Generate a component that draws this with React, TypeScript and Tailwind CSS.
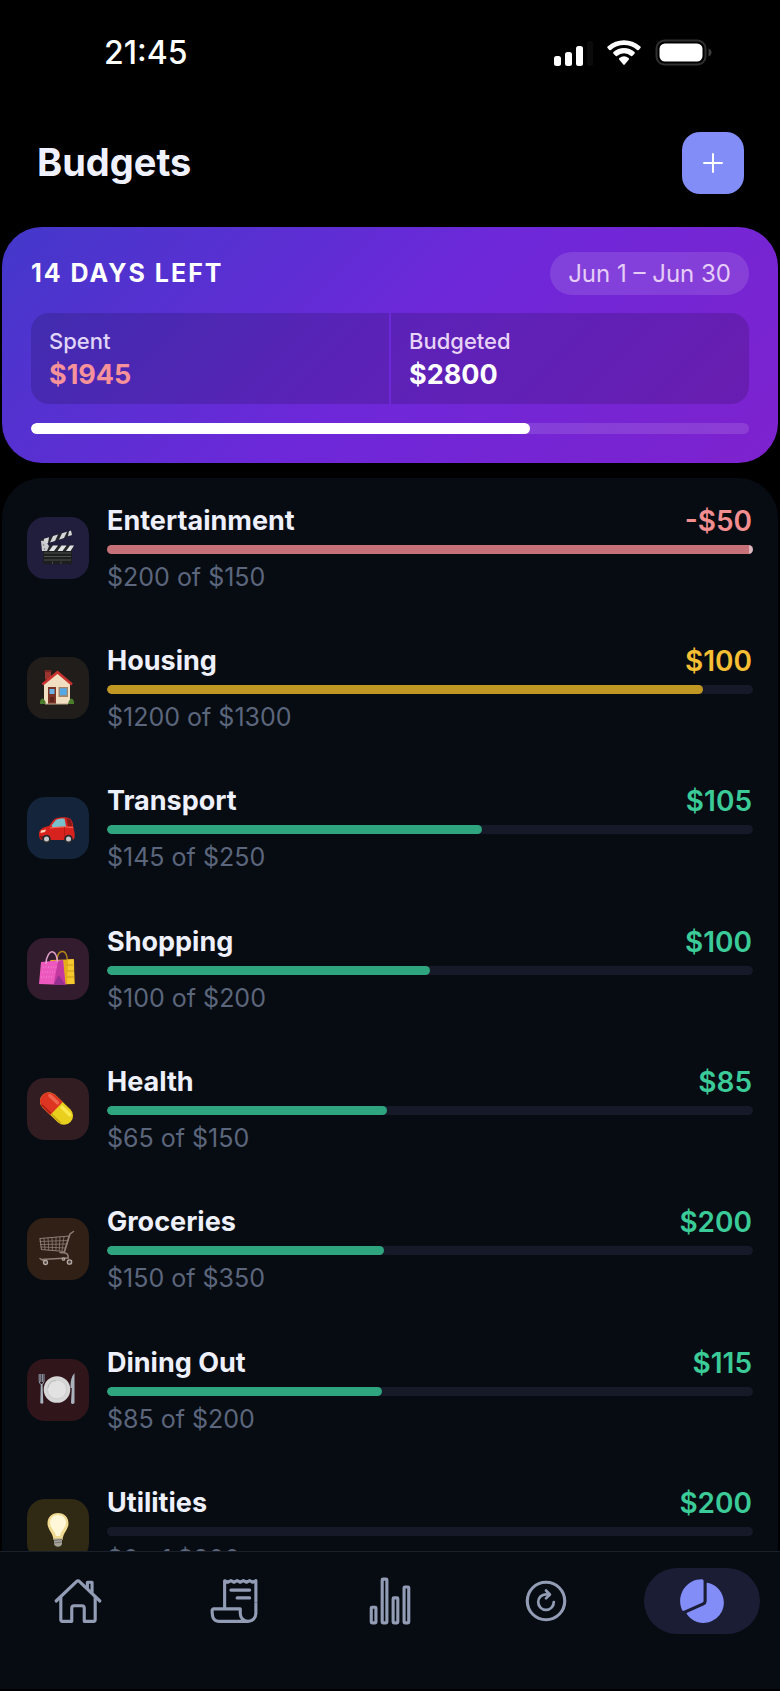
import type { ReactNode } from "react";
import {
  IoAdd,
  IoHomeOutline,
  IoPieChart,
  IoReceiptOutline,
  IoRefreshCircleOutline,
  IoStatsChartOutline,
} from "react-icons/io5";

function Glyph({ children }: { children: ReactNode }) {
  return (
    <svg viewBox="0 0 36 36" className="size-9 overflow-visible" aria-hidden="true">
      {children}
    </svg>
  );
}

const Clapper = () => (
  <Glyph>
    <path d="M0 10 31 0.5l1 5L2 15z" fill="#26272b" />
    <path d="M4 8.800 9 7.200l-1 6-5 1.500zM13 6l5-1.500-3 6.500-5 1.500zM22 3.200l5-1.500-3 6.400-5 1.600zM29 1.200l2-.7 1 4.500-4 1.300z" fill="#d6d6d9" />
    <path d="M3 21V15.500h31l-2 6H3z" fill="#26272b" />
    <path d="M1 11c3-1 6 2 8 5l-2 5H2z" fill="#c9cccf" />
    <circle cx="3.500" cy="15" r="0.800" fill="#777" />
    <circle cx="4.500" cy="19" r="0.800" fill="#777" />
    <path d="M13 15.500h5l-4 5.500H9zM21.500 15.500h5l-4 5.500h-5zM30 15.500h4l-3.500 5.500h-4.500z" fill="#e2e2e4" />
    <path d="M3 21h29v12.500q0 .8-1 .8H4q-1 0-1-.8z" fill="#1d1e20" />
    <path d="M4 23h27M4 26.500h27M4 30h27" stroke="#55564f" strokeWidth="0.900" />
    <path d="M12.500 31.500v2.500M21 31.500v2.500" stroke="#55564f" strokeWidth="0.800" />
  </Glyph>
);

const House = () => (
  <Glyph>
    <path d="M5 0.500h6v9H5z" fill="#99342f" />
    <path d="M4.500 0h7v2h-7z" fill="#6e2523" />
    <path d="M4 14 17.500 2 30 14v20H4z" fill="#f2dfc2" />
    <path d="M2.500 14.500 17.500 2.300 32 14.500" fill="none" stroke="#c9332f" strokeWidth="2.600" />
    <path d="M8 17h8v17H8z" fill="#7b3528" />
    <path d="M9.500 19h5v5h-5z" fill="#67b3e8" />
    <path d="M10 27h4v5h-4z" fill="#5d241c" />
    <path d="M18.500 17h9.500v10h-9.500z" fill="#a98365" />
    <path d="M19.800 18.300h7v7h-7z" fill="#55a7e6" />
    <path d="M0 34q-.5-4 2-5.500 3 0 4 5.500zM28 34q1-5 3.500-5.500 3 1 2.500 5.500z" fill="#4b7d2c" />
    <path d="M5 33.500h23v1H5z" fill="#b8a58b" />
  </Glyph>
);

const Car = () => (
  <Glyph>
    <path d="M-1 24c0-4.500 4-7 10-8l4-5.500c2.500-3 6-3.500 12-3.300 4.500 .2 6.500 2 7.500 5l1.500 8c1 3 1 7 0 9L31 30H2c-2 0-3-3-3-6z" fill="#d8221d" />
    <path d="M11.500 15.500l3.500-4.500c1.800-2.200 4.500-2.500 9.500-2.500l1.500 8-13.500 .7z" fill="#79c0cc" />
    <path d="M26.500 8.600c3.200 .1 4.500 1.300 5 3.600l.8 3.800-4.300.5z" fill="#8a1a19" />
    <path d="M10 18c8-1 16-1.500 23-.500" fill="none" stroke="#ff6b5d" strokeWidth="1" />
    <path d="M24.500 17v12" stroke="#a31613" strokeWidth="0.700" />
    <path d="M1 20.500l5-1-1 2.500-4.500 1z" fill="#ffd7b8" />
    <path d="M0 26h7v3H1z" fill="#821512" />
    <circle cx="6.500" cy="29" r="4.300" fill="#282a2e" />
    <circle cx="6.500" cy="29" r="2.500" fill="#c5c8cc" />
    <circle cx="28.500" cy="29" r="4.300" fill="#282a2e" />
    <circle cx="28.500" cy="29" r="2.500" fill="#c5c8cc" />
  </Glyph>
);

const Bags = () => (
  <Glyph>
    <path d="M17 9c0-6 3-9 6-8.500 3 .5 4 4 4.500 9" fill="none" stroke="#b48618" strokeWidth="1.500" />
    <path d="M10 9l24-.8L34.500 33 20 33.500z" fill="#e5ad19" />
    <path d="M28 8.500l5.500-.5L34.500 33H27z" fill="#f5c82f" />
    <path d="M27 14h6M27 20h7M27 26h7" stroke="#bc8815" strokeWidth="0.700" />
    <path d="M1 11l22-2 2.500 25L-1 33z" fill="#ec58bd" />
    <path d="M18 10l5-1 2.500 25-12 0z" fill="#c339a0" />
    <path d="M18.500 24l7 10h-12z" fill="#963092" />
    <path d="M3 16h14M2 21h13M1 26h12" stroke="#f78bd5" strokeWidth="1" strokeDasharray="1 1.500" />
    <path d="M6 13c0-8 4-13 7-12 3 .8 4 5 4.500 10" fill="none" stroke="#e2a2cb" strokeWidth="1.500" />
  </Glyph>
);

const Pill = () => (
  <Glyph>
    <g transform="rotate(44 16.500 17.500)">
      <rect x="-3" y="8.500" width="39" height="18" rx="9" fill="#e9cf1e" />
      <path d="M6 8.500h10.500v18H6a9 9 0 0 1 0-18z" fill="#dd3522" />
      <rect x="1" y="11" width="14" height="3.500" rx="1.750" fill="#f0644e" />
      <rect x="18" y="11" width="14" height="3.500" rx="1.750" fill="#fae84f" />
      <path d="M3 25h13" stroke="#a91e17" strokeWidth="1.300" />
      <path d="M17 25h13" stroke="#c2a211" strokeWidth="1.300" />
    </g>
  </Glyph>
);

const Cart = () => (
  <Glyph>
    <g fill="none" stroke="#8f7e77" strokeWidth="1.100" strokeLinecap="round">
      <path d="M0 7.500 29 5 24.500 20.500 1.500 18.500z" />
      <path d="M0 10.500l28-1M.5 13.500l27-.5M1 16l25 1M4 7.300l1 11.300M8 7l.8 12M12 6.600l.5 12.600M16 6.300v13M20 6l-.8 13.500M24 5.500 22 20" strokeWidth="0.800" />
      <path d="M33.500 0.500 30 3 24.500 20.500M20 21.500l5 .5q4 1 3 5.500" strokeWidth="1.500" />
      <path d="M1 28.500l27-1.500M0 27.500 5 31" strokeWidth="1.500" />
    </g>
    <g fill="#4b413d" stroke="#b5aaa4" strokeWidth="1.300">
      <circle cx="5.500" cy="31.500" r="2" />
      <circle cx="29.500" cy="31" r="2.200" />
      <circle cx="23.500" cy="28" r="1.200" />
    </g>
  </Glyph>
);

const Plate = () => (
  <Glyph>
    <circle cx="17" cy="17.500" r="13.300" fill="#d6d6d6" />
    <circle cx="17" cy="17.500" r="9.500" fill="#e2e2e2" stroke="#c6c6c7" strokeWidth="0.700" />
    <path d="M8 16a9 9 0 0 1 8-7.500" fill="none" stroke="#b5b5b6" strokeWidth="0.800" />
    <path d="M-.8 2v7q0 3 2.300 3.500Q4 12 4 9V2M.8 2v8M2.400 2v8" fill="none" stroke="#8fa0ad" strokeWidth="1" />
    <path d="M.8 12h1.700l.8 19q-1.500 1.500-3 0z" fill="#a9b5bf" />
    <path d="M34.500 1q-4.500 5-4 15h1.300l-.8 15q1.600 1.800 3.500 0z" fill="#a9b3bb" />
  </Glyph>
);

const Bulb = () => (
  <Glyph>
    <path d="M18 1c-6.500 0-10.500 4.500-10.500 10.500 0 6 5.500 9 6 16.500h9c.5-7.500 6-10.500 6-16.500C28.500 5.500 24.500 1 18 1z" fill="#f0d991" />
    <path d="M18 3c-5 0-8 3.500-8 8s4.500 7 6 13h4c1.500-6 6-8.500 6-13s-3-8-8-8z" fill="#fff7d7" />
    <path d="M14 26.500h8v5.500q-1 2.800-4 2.800T14 32z" fill="#a6a39b" />
    <path d="M14 28.500l8-1M14 31l8-1" stroke="#6e6b65" strokeWidth="0.900" />
  </Glyph>
);

type Tone = "over" | "warn" | "good";

const amountTone: Record<Tone, string> = {
  over: "text-[#f28d90]",
  warn: "text-[#f6be33]",
  good: "text-[#3bcb98]",
};

const barTone: Record<Tone, string> = {
  over: "bg-[#c57177]",
  warn: "bg-[#c19723]",
  good: "bg-[#2ea57e]",
};

type Budget = {
  name: string;
  spent: number;
  total: number;
  tone: Tone;
  tile: string;
  icon: ReactNode;
};

const budgets: Budget[] = [
  { name: "Entertainment", spent: 200, total: 150, tone: "over", tile: "bg-[#211d3c]", icon: <Clapper /> },
  { name: "Housing", spent: 1200, total: 1300, tone: "warn", tile: "bg-[#211d1b]", icon: <House /> },
  { name: "Transport", spent: 145, total: 250, tone: "good", tile: "bg-[#14243a]", icon: <Car /> },
  { name: "Shopping", spent: 100, total: 200, tone: "good", tile: "bg-[#321c2e]", icon: <Bags /> },
  { name: "Health", spent: 65, total: 150, tone: "good", tile: "bg-[#321d22]", icon: <Pill /> },
  { name: "Groceries", spent: 150, total: 350, tone: "good", tile: "bg-[#312016]", icon: <Cart /> },
  { name: "Dining Out", spent: 85, total: 200, tone: "good", tile: "bg-[#30151b]", icon: <Plate /> },
  { name: "Utilities", spent: 0, total: 200, tone: "good", tile: "bg-[#302914]", icon: <Bulb /> },
];

function BudgetRow({ name, spent, total, tone, tile, icon }: Budget) {
  const left = total - spent;
  const share = Math.min(100, (spent / total) * 100);
  return (
    <li className="flex h-[140px] shrink-0 items-start gap-[18px] nth-[3n]:h-[141px]">
      <div className={`mt-3 flex size-[62px] shrink-0 items-center justify-center rounded-[18px] ${tile}`}>{icon}</div>
      <div className="min-w-0 flex-1">
        <div className="flex h-8 items-center justify-between pr-px">
          <h2 className="text-[27px] font-bold text-[#eef0fb]">{name}</h2>
          <span className={`text-[28px] font-semibold ${amountTone[tone]}`}>
            {left < 0 ? `-$${-left}` : `$${left}`}
          </span>
        </div>
        <div className="mt-2 flex h-[9px] overflow-hidden rounded-full bg-[#161927]">
          <div
            className={`h-full ${barTone[tone]} ${spent > total ? "" : "rounded-full"}`}
            style={{ width: `${share}%` }}
          />
          {spent > total && <div className="h-full w-1 shrink-0 bg-[#dfb6bd]" />}
        </div>
        <p className="mt-[5px] text-[25px] leading-9 text-[#5b667c]">
          ${spent} of ${total}
        </p>
      </div>
    </li>
  );
}

function StatusIcons() {
  return (
    <svg viewBox="0 0 160 28" className="h-7 w-40" aria-hidden="true">
      <g fill="#fff">
        <rect x="1" y="17" width="7" height="10" rx="2.500" />
        <rect x="12" y="13" width="7" height="14" rx="2.500" />
        <rect x="23" y="7" width="7" height="20" rx="2.500" />
      </g>
      <rect x="34" y="2" width="6" height="25" rx="2.500" fill="#0b0b0b" />
      <path d="M54.500 9a1.200 1.200 0 0 1 .1-1.500c9.400-8.200 23.400-8.200 32.800 0a1.200 1.200 0 0 1 .1 1.500l-1.800 1.900a1.200 1.200 0 0 1-1.600.1 19.500 19.500 0 0 0-26.200 0 1.200 1.200 0 0 1-1.600-.1z" fill="#fff" />
      <path d="M60.500 14.800a1.200 1.200 0 0 1 0-1.700 15.700 15.700 0 0 1 21 0 1.200 1.200 0 0 1 0 1.700l-2 2a1.200 1.200 0 0 1-1.500.1 10.700 10.700 0 0 0-14 0 1.200 1.200 0 0 1-1.500-.1z" fill="#fff" />
      <path d="M66.300 20.700a1.100 1.100 0 0 1 .1-1.700 7.300 7.300 0 0 1 9.200 0 1.100 1.100 0 0 1 .1 1.700l-4 4.900a1 1 0 0 1-1.400 0z" fill="#fff" />
      <rect x="103.500" y="1.500" width="49" height="24" rx="8" fill="none" stroke="#303030" strokeWidth="2" />
      <rect x="106.500" y="4.500" width="43" height="18" rx="5.500" fill="#fff" />
      <path d="M155.500 9.500q3 1.200 3 4t-3 4z" fill="#3c3c3c" />
    </svg>
  );
}

const tabs = [
  { label: "Home", Icon: IoHomeOutline },
  { label: "Transactions", Icon: IoReceiptOutline },
  { label: "Statistics", Icon: IoStatsChartOutline },
  { label: "Recurring", Icon: IoRefreshCircleOutline },
  { label: "Budgets", Icon: IoPieChart },
];

export default function App() {
  return (
    <div className="flex h-screen flex-col overflow-hidden bg-black font-['Inter',sans-serif]">
      <div className="flex h-[106px] shrink-0 items-center justify-between pr-[67px] pl-[104px]">
        <time className="text-[32px] font-medium text-white">21:45</time>
        <StatusIcons />
      </div>

      <header className="flex h-[121px] shrink-0 items-center justify-between pr-9 pb-2 pl-[37px]">
        <h1 className="text-[38px] font-bold text-[#f0f1fe]">Budgets</h1>
        <button
          type="button"
          aria-label="Add budget"
          className="flex size-[62px] items-center justify-center rounded-[18px] bg-[#828df8] text-white"
        >
          <IoAdd className="size-8" />
        </button>
      </header>

      <section className="mx-0.5 shrink-0 rounded-[40px] bg-[linear-gradient(135deg,#4338ca_0%,#6d28d9_50%,#7e22ce_100%)] px-[29px] pt-[25px] pb-[29px]">
        <div className="flex items-center justify-between">
          <p className="text-[25px] font-bold tracking-[2px] text-white">14 DAYS LEFT</p>
          <p className="flex h-[43px] items-center rounded-full bg-white/12 px-[18px] text-[24px] text-[#e5cdf7]">
            Jun 1 – Jun 30
          </p>
        </div>
        <dl className="mt-[18px] flex h-[91px] gap-0.5 overflow-hidden rounded-[18px]">
          <div className="flex flex-1 flex-col justify-center bg-black/15 px-[18px] pb-1">
            <dt className="text-[22px] leading-9 font-medium text-[#e0d5f7]">Spent</dt>
            <dd className="text-[27px] leading-8 font-bold text-[#f8929a]">$1945</dd>
          </div>
          <div className="flex flex-1 flex-col justify-center bg-black/15 px-[18px] pb-1">
            <dt className="text-[22px] leading-9 font-medium text-[#e7d3f6]">Budgeted</dt>
            <dd className="text-[27px] leading-8 font-bold text-white">$2800</dd>
          </div>
        </dl>
        <div className="mt-[19px] h-[11px] overflow-hidden rounded-full bg-white/12">
          <div className="h-full rounded-full bg-white" style={{ width: `${(1945 / 2800) * 100}%` }} />
        </div>
      </section>

      <main className="mx-0.5 mt-[15px] min-h-0 flex-1 overflow-hidden rounded-t-[40px] bg-[#070b12]">
        <ul className="flex flex-col px-[25px] pt-[27px]">
          {budgets.map((b) => (
            <BudgetRow key={b.name} {...b} />
          ))}
        </ul>
      </main>

      <nav className="mb-0.5 flex h-[138px] shrink-0 items-start border-t border-[#1b212b] bg-[#070b12] pt-4">
        {tabs.map(({ label, Icon }) => {
          const active = label === "Budgets";
          return (
            <a key={label} href="#" aria-label={label} className="flex flex-1 justify-center">
              <span
                className={`flex h-[66px] w-[116px] items-center justify-center rounded-full ${
                  active ? "bg-[#1b1d34] text-[#828df8]" : "text-[#929db5]"
                }`}
              >
                <Icon className="size-[50px]" />
              </span>
            </a>
          );
        })}
      </nav>
    </div>
  );
}
